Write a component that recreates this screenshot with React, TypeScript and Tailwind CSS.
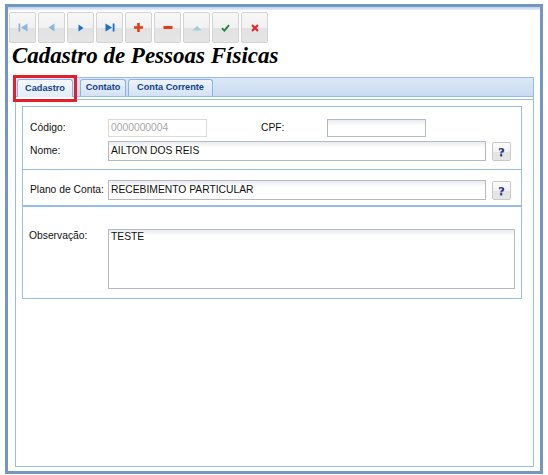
import React from "react";

const Btn = ({ children }: { children: React.ReactNode }) => (
  <div className="w-[27px] h-[31px] shrink-0 rounded-[2px] border border-[#d3d3d3] bg-[linear-gradient(to_bottom,#f7f7f7_0%,#f1f1f1_50%,#e2e2e2_52%,#e6e6e6_100%)] flex items-center justify-center">
    {children}
  </div>
);

const Help = () => (
  <div className="ml-[6px] w-[19px] h-[19px] shrink-0 rounded-[2px] border border-[#c9c9c9] bg-[linear-gradient(to_bottom,#fbfbfb_0%,#f3f3f3_50%,#e3e3e3_52%,#e6e6e6_100%)] flex items-center justify-center">
    <span className="font-['Liberation_Serif',serif] font-bold text-[13px] leading-none text-[#1d2a86] [text-shadow:0_1px_0_#8890c0]">?</span>
  </div>
);

const inputCls =
  "h-[20px] border border-[#b6b8c6] bg-[linear-gradient(to_bottom,#e9ebef_0px,#ffffff_6px)] pl-[2px] text-[#111] flex items-center";

export default function App() {
  return (
    <div className="relative w-[548px] h-[475px] bg-white overflow-hidden font-['Liberation_Sans',Arial,sans-serif] text-[10.3px] text-[#111]">
      <div className="ml-[5px] mt-[4px] w-[538px] h-[470px] border-[3px] border-[#7396c3] flex flex-col">
        <div className="h-[3px] shrink-0 bg-[linear-gradient(to_bottom,#bfd1e8,#e6eef7)]" />
        {/* toolbar */}
        <div className="mt-[2px] ml-[1px] flex gap-[2px]">
          <Btn>
            <svg width="10" height="9" viewBox="0 0 10 9">
              <rect x="0.5" y="0.5" width="1.8" height="8" fill="#8ab7de" />
              <path d="M9.5 0.5 L3 4.5 L9.5 8.5Z" fill="#8ab7de" />
            </svg>
          </Btn>
          <Btn>
            <svg width="7" height="9" viewBox="0 0 7 9">
              <path d="M6.5 0.5 L0.5 4.5 L6.5 8.5Z" fill="#8ab7de" />
            </svg>
          </Btn>
          <Btn>
            <svg width="6" height="8" viewBox="0 0 6 8">
              <path d="M0.5 0.5 L5.5 4 L0.5 7.5Z" fill="#1a6fc6" />
            </svg>
          </Btn>
          <Btn>
            <svg width="10" height="9" viewBox="0 0 10 9">
              <path d="M0.5 0.5 L7 4.5 L0.5 8.5Z" fill="#1a6fc6" />
              <rect x="7.7" y="0.5" width="1.8" height="8" fill="#1a6fc6" />
            </svg>
          </Btn>
          <Btn>
            <svg width="9" height="9" viewBox="0 0 9 9">
              <path d="M3.2 0h2.6v3.2H9v2.6H5.8V9H3.2V5.8H0V3.2h3.2z" fill="#e63b17" />
            </svg>
          </Btn>
          <Btn>
            <svg width="10" height="3" viewBox="0 0 10 3">
              <rect x="0.5" y="0" width="9" height="3" fill="#e63b17" />
            </svg>
          </Btn>
          <Btn>
            <svg width="10" height="6" viewBox="0 0 10 6">
              <path d="M0.5 5.5 L5 0.8 L9.5 5.5Z" fill="#9dd0da" />
            </svg>
          </Btn>
          <Btn>
            <svg width="9" height="8" viewBox="0 0 9 8">
              <path d="M1 4.2 L3.4 6.6 L8 1.2" fill="none" stroke="#28893b" strokeWidth="2" />
            </svg>
          </Btn>
          <Btn>
            <svg width="8" height="8" viewBox="0 0 8 8">
              <path d="M1 1 L7 7 M7 1 L1 7" fill="none" stroke="#e4232a" strokeWidth="2" />
            </svg>
          </Btn>
        </div>
        {/* title */}
        <div className="h-[26px] pl-[4px] font-['Liberation_Serif',serif] font-bold italic text-[23px] leading-[26px] text-black">
          Cadastro de Pessoas Físicas
        </div>
        {/* tab panel */}
        <div className="mt-[8px] ml-[7px] w-[519px] h-[390px] border border-[#99bbe8] flex flex-col">
          <div className="h-[19px] shrink-0 border-b border-[#99bbe8] bg-[linear-gradient(to_bottom,#dce8f7,#c9dbf1)] flex items-end font-bold text-[9.2px] text-[#15428b]">
            <div className="ml-[1px] -mb-[1px] w-[56px] h-[18px] rounded-t-[3px] border border-b-0 border-[#8db2e3] bg-[linear-gradient(to_bottom,#f4f8fd,#e3edf9)] flex items-center justify-center">
              Cadastro
            </div>
            <div className="ml-[7px] w-[46px] h-[17px] rounded-t-[3px] border border-b-0 border-[#8db2e3] bg-[linear-gradient(to_bottom,#edf3fb,#d3e2f5)] flex items-center justify-center">
              Contato
            </div>
            <div className="ml-[2px] w-[85px] h-[17px] rounded-t-[3px] border border-b-0 border-[#8db2e3] bg-[linear-gradient(to_bottom,#edf3fb,#d3e2f5)] flex items-center justify-center">
              Conta Corrente
            </div>
          </div>
          <div className="h-[2px] shrink-0 bg-white" />
          <div className="flex-1 border-t border-[#99bbe8] pl-[6px] pt-[6px]">
            {/* box 1 */}
            <div className="w-[500px] border border-[#96bce8] pt-[12px] pb-[8px] pl-[7px] flex flex-col gap-[4px]">
              <div className="flex items-center h-[18px]">
                <div className="w-[78px] shrink-0">Código:</div>
                <div className="w-[99px] h-[18px] border border-[#d9d9d9] bg-white pl-[2px] text-[#a6a6a6] flex items-center">
                  0000000004
                </div>
                <div className="ml-[54px] w-[66px] shrink-0">CPF:</div>
                <div className="w-[99px] h-[18px] border border-[#b6b8c6] bg-[linear-gradient(to_bottom,#e9ebef_0px,#ffffff_6px)]" />
              </div>
              <div className="flex items-center h-[20px]">
                <div className="w-[78px] shrink-0">Nome:</div>
                <div className={`${inputCls} w-[378px]`}>AILTON DOS REIS</div>
                <Help />
              </div>
            </div>
            {/* box 2 */}
            <div className="w-[500px] border-x border-b border-[#96bce8] pt-[10px] pb-[5px] pl-[7px]">
              <div className="flex items-center h-[20px]">
                <div className="w-[78px] shrink-0">Plano de Conta:</div>
                <div className={`${inputCls} w-[378px]`}>RECEBIMENTO PARTICULAR</div>
                <Help />
              </div>
            </div>
            {/* box 3 */}
            <div className="w-[500px] border border-[#96bce8] pt-[22px] pb-[9px] pl-[6px] flex">
              <div className="w-[79px] shrink-0 leading-[14px]">Observação:</div>
              <div className="w-[407px] h-[60px] border border-[#b6b8c6] bg-[linear-gradient(to_bottom,#e9ebef_0px,#ffffff_6px)] pl-[2px] pt-[1px] leading-[12px] text-[#111]">
                TESTE
              </div>
            </div>
          </div>
        </div>
      </div>
      {/* red highlight */}
      <div className="absolute left-[13px] top-[75px] w-[64px] h-[27px] border-[3px] border-[#e3202a]" />
    </div>
  );
}
